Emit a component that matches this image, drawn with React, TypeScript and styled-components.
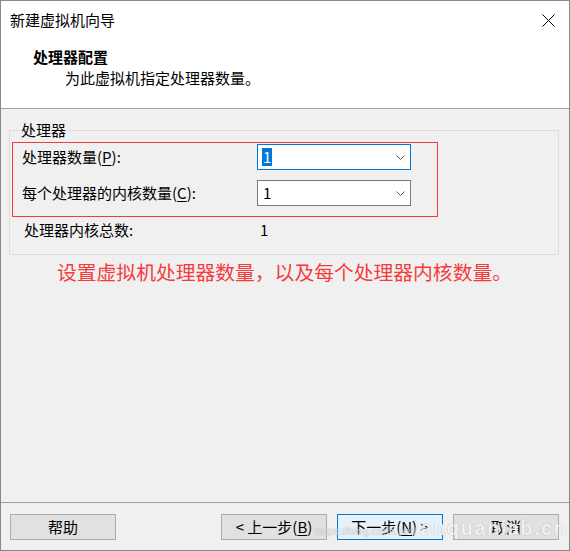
import styled, { createGlobalStyle } from 'styled-components';

const GlobalStyle = createGlobalStyle`
  html, body {
    margin: 0;
    padding: 0;
    background: #ffffff;
  }
  * {
    box-sizing: border-box;
  }
`;

const FONT = `"Noto Sans CJK SC", "Noto Sans", "Liberation Sans", sans-serif`;

const Window = styled.div`
  position: relative;
  width: 570px;
  height: 551px;
  border: 1px solid #888888;
  display: flex;
  flex-direction: column;
  font-family: ${FONT};
  font-size: 15px;
  color: #000000;
  background: #f0f0f0;
`;

const Header = styled.div`
  background: #ffffff;
  border-bottom: 1px solid #a0a0a0;
  padding-bottom: 20px;
`;

const TitleBar = styled.div`
  display: flex;
  align-items: center;
  justify-content: space-between;
  padding: 9px 14px 0 9px;
  height: 29px;
  line-height: 20px;
`;

const Heading = styled.div`
  margin-top: 17px;
  padding-left: 32px;
  font-weight: 700;
  line-height: 20px;
`;

const SubHeading = styled.div`
  margin-top: 1px;
  padding-left: 64px;
  line-height: 20px;
`;

const Body = styled.div`
  flex: 1;
  padding: 0 10px 0 8px;
`;

const GroupBox = styled.fieldset`
  margin: 11px 0 0 0;
  padding: 2px 0 14px 2px;
  border: 1px solid #dcdcdc;
  min-width: 0;
`;

const Legend = styled.legend`
  margin-left: 8px;
  padding: 0 1px;
  line-height: 20px;
`;

const Highlight = styled.div`
  width: 426px;
  border: 1px solid #f03c3c;
  padding: 1px 0 10px 9px;
  display: grid;
  grid-template-columns: 235px 154px;
  row-gap: 10px;
  align-items: center;
`;

const FieldLabel = styled.label`
  line-height: 20px;
  white-space: nowrap;
`;

const Key = styled.span`
  text-decoration: underline;
  text-underline-offset: 2px;
`;

const Combo = styled.div<{ $focused?: boolean }>`
  height: 26px;
  border: 1px solid ${(p) => (p.$focused ? '#0078d7' : '#7a7a7a')};
  background: #ffffff;
  display: flex;
  align-items: center;
  justify-content: space-between;
  padding: 0 5px 0 4px;
  line-height: 18px;
`;

const ComboValue = styled.span<{ $selected?: boolean }>`
  padding: 0 1px;
  background: ${(p) => (p.$selected ? '#0078d7' : 'transparent')};
  color: ${(p) => (p.$selected ? '#ffffff' : '#000000')};
`;

const TotalRow = styled.div`
  display: grid;
  grid-template-columns: 236px auto;
  margin-top: 3px;
  padding-left: 12px;
  line-height: 20px;
`;

const Note = styled.div`
  margin-top: 4px;
  padding-left: 48px;
  font-size: 19.8px;
  line-height: 26px;
  color: #f53b3b;
  white-space: nowrap;
`;

const Footer = styled.div`
  border-top: 1px solid #a0a0a0;
  padding: 11px 10px 10px 9px;
  display: flex;
  align-items: center;
  gap: 10px;
`;

const Spacer = styled.div`
  flex: 1;
`;

const Button = styled.button<{ $primary?: boolean }>`
  width: 106px;
  height: 26px;
  padding: 0;
  font-family: ${FONT};
  font-size: 15px;
  line-height: 20px;
  color: #000000;
  white-space: pre;
  background: ${(p) => (p.$primary ? '#e5f1fb' : '#e1e1e1')};
  border: 1px solid ${(p) => (p.$primary ? '#0078d7' : '#adadad')};
  border-radius: 0;
`;

const Watermark = styled.div`
  position: absolute;
  left: 314px;
  top: 516px;
  display: flex;
  align-items: baseline;
  gap: 4px;
  color: rgba(255, 255, 255, 0.85);
  text-shadow: 0 0 1px rgba(120, 120, 120, 0.6);
  font-family: "Liberation Sans", sans-serif;
  pointer-events: none;
  white-space: nowrap;
`;

const WatermarkUrl = styled.span`
  font-size: 11px;
  color: rgba(255, 255, 255, 0.6);
`;

const WatermarkSite = styled.span`
  font-size: 20px;
  font-weight: 700;
  letter-spacing: 1.5px;
`;

const CloseIcon = () => (
  <svg width="13" height="13" viewBox="0 0 13 13">
    <path d="M0.5 0.5 L12.5 12.5 M12.5 0.5 L0.5 12.5" stroke="#000" strokeWidth="1" fill="none" />
  </svg>
);

const Chevron = () => (
  <svg width="9" height="5" viewBox="0 0 9 5">
    <polyline points="0.5,0.5 4.5,4.5 8.5,0.5" stroke="#5a5a5a" strokeWidth="1" fill="none" />
  </svg>
);

export default function App() {
  return (
    <>
      <GlobalStyle />
      <Window>
        <Header>
          <TitleBar>
            <span>新建虚拟机向导</span>
            <CloseIcon />
          </TitleBar>
          <Heading>处理器配置</Heading>
          <SubHeading>为此虚拟机指定处理器数量。</SubHeading>
        </Header>
        <Body>
          <GroupBox>
            <Legend>处理器</Legend>
            <Highlight>
              <FieldLabel>
                处理器数量(<Key>P</Key>):
              </FieldLabel>
              <Combo $focused>
                <ComboValue $selected>1</ComboValue>
                <Chevron />
              </Combo>
              <FieldLabel>
                每个处理器的内核数量(<Key>C</Key>):
              </FieldLabel>
              <Combo>
                <ComboValue>1</ComboValue>
                <Chevron />
              </Combo>
            </Highlight>
            <TotalRow>
              <span>处理器内核总数:</span>
              <span>1</span>
            </TotalRow>
          </GroupBox>
          <Note>设置虚拟机处理器数量，以及每个处理器内核数量。</Note>
        </Body>
        <Footer>
          <Button>帮助</Button>
          <Spacer />
          <Button>
            {'< 上一步('}<Key>B</Key>{')'}
          </Button>
          <Button $primary>
            {'下一步('}<Key>N</Key>{') >'}
          </Button>
          <Button>取消</Button>
        </Footer>
        <Watermark>
          <WatermarkUrl>https://blog.csdn.net/</WatermarkUrl>
          <WatermarkSite>anquanlab.cn</WatermarkSite>
        </Watermark>
      </Window>
    </>
  );
}
